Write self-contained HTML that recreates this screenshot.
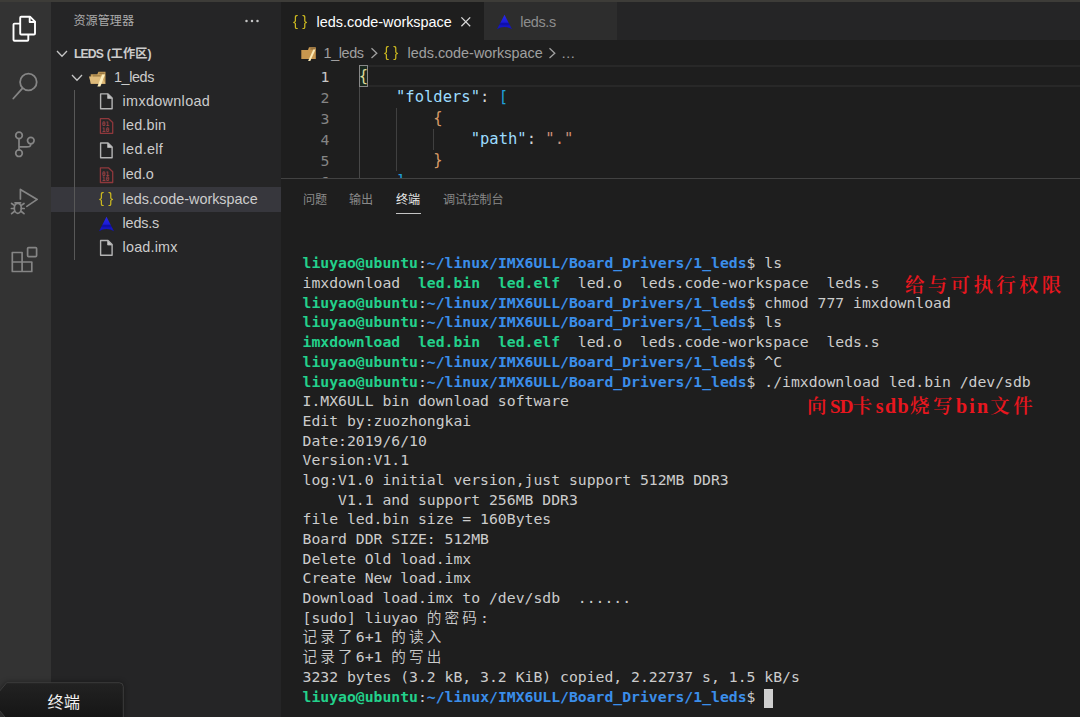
<!DOCTYPE html>
<html lang="zh-CN">
<head>
<meta charset="utf-8">
<title>leds.code-workspace - LEDS (工作区) - Visual Studio Code</title>
<style>
html,body{margin:0;padding:0;}
body{width:1080px;height:717px;overflow:hidden;background:#1e1e1e;position:relative;
  font-family:"Liberation Sans","Noto Sans CJK SC",sans-serif;color:#cccccc;}
.abs{position:absolute;}
#topstrip{left:0;top:0;width:1080px;height:2px;background:#3d3c38;}
#activity{left:0;top:2px;width:51px;height:715px;background:#333333;}
#sidebar{left:51px;top:2px;width:230px;height:715px;background:#252526;}
#editor{left:281px;top:2px;width:799px;height:715px;background:#1e1e1e;}
#tabbar{left:281px;top:2px;width:799px;height:38px;background:#252526;}
#tab1{left:281px;top:2px;width:203px;height:38px;background:#1e1e1e;}
#tab2{left:484px;top:2px;width:133px;height:38px;background:#2d2d2d;}
.ui{font-size:14.3px;line-height:24px;white-space:nowrap;}
.row{left:51px;width:230px;height:24px;}
.row .lbl{position:absolute;top:0;font-size:14.6px;line-height:24px;color:#cccccc;white-space:nowrap;}
.sl{font-size:14.4px;}
.brace{will-change:transform;font-size:14.8px;line-height:23px;color:#cbb820;white-space:nowrap;letter-spacing:4.300px;font-family:"Liberation Sans",sans-serif;}
.mono{font-family:"DejaVu Sans Mono","Liberation Mono",monospace;}
#code{font-size:15.4px;line-height:21px;white-space:pre;color:#d4d4d4;}
.ln{position:absolute;width:40px;text-align:right;color:#858585;font-size:14.8px;line-height:21px;left:289.400px;}
.cl{position:absolute;left:358.700px;font-size:15.5px;line-height:21px;white-space:pre;color:#d4d4d4;}
.k{color:#9cdcfe;} .s{color:#ce9178;}
.guide{position:absolute;width:1px;background:#404040;}
#term{left:302.5px;top:253.4px;font-size:14.75px;line-height:19.68px;white-space:pre;color:#cccccc;
  font-family:"DejaVu Sans Mono","Noto Sans Mono CJK SC","Noto Sans CJK SC","Liberation Mono",monospace;}
#term .g{color:#23d18b;font-weight:bold;}
#term .b{color:#3b8eea;font-weight:bold;}
#term .cj{font-family:"Noto Sans CJK SC","Noto Sans Mono CJK SC",sans-serif;font-weight:350;font-size:14.6px;letter-spacing:3.160px;line-height:0;}
.red{position:absolute;color:#e8161e;font-family:"Liberation Serif","Noto Serif CJK SC",serif;font-weight:600;white-space:nowrap;font-size:19.5px;line-height:28px;letter-spacing:3.400px;}
.red .la{font-weight:bold;font-size:20px;}
.ptab{position:absolute;top:187.6px;font-size:12.1px;line-height:24px;color:#898989;white-space:nowrap;}
</style>
</head>
<body>
<svg width="0" height="0" style="position:absolute"><defs><linearGradient id="ag" x1="0" y1="0" x2="0" y2="1"><stop offset="0" stop-color="#2a2ae6"/><stop offset="0.5" stop-color="#1c1cd8"/><stop offset="0.62" stop-color="#0c0ca0"/><stop offset="0.78" stop-color="#1616c4"/><stop offset="1" stop-color="#1010b4"/></linearGradient></defs></svg>
<div class="abs" id="activity"></div>
<div class="abs" id="sidebar"></div>
<div class="abs" id="editor"></div>
<div class="abs" id="tabbar"></div>
<div class="abs" id="tab1"></div>
<div class="abs" id="tab2"></div>
<div class="abs" id="topstrip"></div>

<!-- activity bar icons -->
<svg class="abs" style="left:0;top:2px" width="51" height="300" viewBox="0 0 51 300" fill="none" stroke-linecap="round" stroke-linejoin="round">
  <!-- explorer -->
  <g stroke="#ffffff" stroke-width="1.9">
    <path d="M21.2 14.7 H30 L35 19.7 V31.5 Q35 32.5 34 32.5 H21.2 Q20.2 32.5 20.2 31.5 V15.7 Q20.2 14.7 21.2 14.7 Z"/>
    <path d="M29.7 14.9 V20 H34.8"/>
    <path d="M20 21.6 H14.5 Q13.5 21.6 13.5 22.6 V37.800 Q13.5 38.8 14.5 38.8 H27.3 Q28.3 38.8 28.3 37.8 V33"/>
  </g>
  <!-- search -->
  <g stroke="#858585" stroke-width="1.8">
    <circle cx="28.4" cy="80" r="8.3"/>
    <path d="M22.4 86.300 L13.3 96.5"/>
  </g>
  <!-- scm -->
  <g stroke="#858585" stroke-width="1.7">
    <circle cx="19" cy="133.4" r="3.3"/>
    <circle cx="19" cy="151.2" r="3.3"/>
    <circle cx="30.8" cy="138.6" r="3.3"/>
    <path d="M19 136.800 V147.800 M30.8 142 C30.8 145 29 144.800 26 144.800 H19.3"/>
  </g>
  <!-- debug -->
  <g stroke="#858585" stroke-width="1.7">
    <path d="M20.4 197 V187.400 L37.2 197.400 L26.8 204.400"/>
    <ellipse cx="17.8" cy="206.3" rx="3.5" ry="5"/>
    <path d="M11.6 201.500 L14.300 203.400 M11.4 206.500 H14.300 M11.600 211.700 L14.300 209.500 M24 201.500 L21.3 203.400 M24.200 206.500 H21.3 M24 211.700 L21.3 209.500 M15 200.800 H20.600"/>
  </g>
  <!-- extensions -->
  <g stroke="#858585" stroke-width="1.7">
    <path d="M12.3 250.5 H22.100 V260 H31.800 V269.500 H12.3 Z M22.100 260 V269.500 M12.3 260 H22.100"/>
    <rect x="27.6" y="245.600" width="9" height="9" rx="1"/>
  </g>
</svg>

<!-- sidebar -->
<div class="abs" style="left:73.5px;top:8.8px;font-size:12.1px;line-height:24px;color:#ababab;white-space:nowrap">资源管理器</div>
<svg class="abs" style="left:242.500px;top:17px" width="20" height="8"><circle cx="3.5" cy="4" r="1.25" fill="#c5c5c5"/><circle cx="9" cy="4" r="1.25" fill="#c5c5c5"/><circle cx="14.5" cy="4" r="1.25" fill="#c5c5c5"/></svg>

<div class="abs" id="ws" style="left:74px;top:42px;font-size:12.200px;line-height:24px;font-weight:bold;color:#cccccc;white-space:nowrap"><span style="letter-spacing:-0.9px">LEDS</span><span style="letter-spacing:0.5px"> </span>(工作区)</div>
<svg class="abs" style="left:54.2px;top:46px" width="16" height="16" fill="none" stroke="#c5c5c5" stroke-width="1.3"><path d="M3 5 L8 10.3 L13 5"/></svg>
<svg class="abs" style="left:69.2px;top:70.300px" width="16" height="16" fill="none" stroke="#c5c5c5" stroke-width="1.3"><path d="M3 5 L8 10.3 L13 5"/></svg>

<!-- folder icon -->
<svg class="abs" style="left:88px;top:70px" width="20" height="18" viewBox="0 0 20 18"><path d="M2.7 4.200 H9.300 L10.400 1.800 H17.500 V13.700 H2.7 Z" fill="#c49c58"/><path d="M5 5.600 H12.400 V6.600 H5 Z" fill="#7d6236"/><path d="M11.500 2.800 H16.5 V3.800 H11.2 Z" fill="#8d6e3d"/><path d="M1 6.500 H13.600 L17.500 13.700 H2.900 Z" fill="#deba7a"/><path d="M14.100 4.400 L17 4.400 L12.400 16.600 L9.400 16.600 Z" fill="#fdeebb"/></svg>

<div class="abs" style="left:51px;top:187px;width:230px;height:24.5px;background:#37373d"></div>
<div class="abs" style="left:74px;top:90px;width:1px;height:170px;background:#585858"></div>

<div class="abs ui sl" id="l0" style="letter-spacing:-0.4px;left:114px;top:65px">1_leds</div>
<div class="abs ui sl" id="l1" style="letter-spacing:0.32px;left:122.6px;top:88.9px">imxdownload</div>
<div class="abs ui sl" id="l2" style="letter-spacing:0.18px;left:122.6px;top:113.2px">led.bin</div>
<div class="abs ui sl" id="l3" style="letter-spacing:0.3px;left:122.6px;top:137.2px">led.elf</div>
<div class="abs ui sl" id="l4" style="left:122.6px;top:161.7px">led.o</div>
<div class="abs ui sl" id="l5" style="left:122.6px;top:186.7px">leds.code-workspace</div>
<div class="abs ui sl" id="l6" style="letter-spacing:-0.2px;left:122.6px;top:210.9px">leds.s</div>
<div class="abs ui sl" id="l7" style="letter-spacing:0.17px;left:122.6px;top:235.2px">load.imx</div>

<!-- file icons -->
<svg class="abs" style="left:95px;top:90px" width="22" height="170" viewBox="0 0 22 170" fill="none">
  <g stroke="#b4b4b4" stroke-width="1.4" stroke-linejoin="round">
    <path d="M5.600 3.900 H13 L17.100 8 V18.700 H5.600 Z"/><path d="M12.600 3.900 V8.400 H17.100 Z" fill="#c8c8c8" stroke-width="0.800"/>
    <path d="M5.600 53 H13 L17.100 57.100 V67.800 H5.600 Z"/><path d="M12.600 53 V57.500 H17.100 Z" fill="#c8c8c8" stroke-width="0.800"/>
    <path d="M5.600 150.500 H13 L17.100 154.600 V165.300 H5.600 Z"/><path d="M12.600 150.500 V155 H17.100 Z" fill="#c8c8c8" stroke-width="0.800"/>
  </g>
  <g stroke="#8f383c" stroke-width="1.3" stroke-linejoin="round">
    <path d="M5.400 28.600 H13.400 L17.700 32.600 V43.300 H5.400 Z"/>
    <path d="M5.400 77.800 H13.400 L17.700 81.800 V92.500 H5.400 Z"/>
  </g>
</svg>
<div class="abs mono" style="left:101.800px;top:121.300px;font-size:6.300px;line-height:5.300px;color:#9c4246;font-weight:bold;white-space:pre">01
10</div>
<div class="abs mono" style="left:101.800px;top:170.500px;font-size:6.300px;line-height:5.300px;color:#9c4246;font-weight:bold;white-space:pre">01
10</div>
<div class="abs brace" style="left:99.300px;top:187px">{}</div>
<svg class="abs" style="left:98px;top:215.500px" width="18" height="18" viewBox="0 0 18 18"><path d="M8.500 0.800 L16 15.300 Q8.500 10.500 1 15.300 Z" fill="url(#ag)"/></svg>

<!-- tabs -->
<div class="abs brace" style="left:293.2px;top:10px">{}</div>
<div class="abs ui sl" id="t1" style="left:316.6px;top:9.5px;color:#ffffff">leds.code-workspace</div>
<svg class="abs" style="left:459px;top:15px" width="14" height="14" fill="none" stroke="#d8d8d8" stroke-width="1.3"><path d="M2.400 2.400 L11.200 11.200 M11.200 2.400 L2.400 11.200"/></svg>
<svg class="abs" style="left:496px;top:13.700px" width="18" height="18" viewBox="0 0 18 18"><path d="M8.500 0.800 L16 15.300 Q8.500 10.500 1 15.300 Z" fill="url(#ag)"/></svg>
<div class="abs ui sl" id="t2" style="left:520.300px;top:9.5px;color:#8e8e8e;letter-spacing:-0.35px">leds.s</div>

<!-- breadcrumbs -->
<svg class="abs" style="left:299.5px;top:45px" width="18" height="18" viewBox="0 0 18 18"><path d="M1.300 5 H8 L9 2.200 H15.800 V13.900 H1.300 Z" fill="#c8974f"/><path d="M10.500 3.300 H15 V4.400 H10.200 Z" fill="#8a683a"/><path d="M13.300 4.500 L15.500 4.500 L10.300 16.100 L8.100 16.100 Z" fill="#fbe9b5"/></svg>
<div class="abs ui sl" id="b1" style="left:323.600px;top:40.5px;color:#a0a0a0;letter-spacing:-0.400px">1_leds</div>
<svg class="abs" style="left:367px;top:47px" width="12" height="14" fill="none" stroke="#a0a0a0" stroke-width="1.300"><path d="M4.500 1.300 L9.800 6.200 L4.500 11.100"/></svg>
<div class="abs brace" style="left:384.200px;top:41px">{}</div>
<div class="abs ui sl" id="b2" style="left:407.500px;top:40.5px;color:#a0a0a0">leds.code-workspace</div>
<svg class="abs" style="left:545px;top:47px" width="12" height="14" fill="none" stroke="#a0a0a0" stroke-width="1.300"><path d="M4.500 1.300 L9.800 6.200 L4.500 11.100"/></svg>
<div class="abs ui sl" id="b3" style="left:561px;top:40.5px;color:#a0a0a0">…</div>

<!-- editor content -->
<div class="abs" style="left:359px;top:65px;width:721px;height:18px;border-top:2px solid #282828;border-bottom:2px solid #282828"></div>
<div class="guide" style="left:359px;top:65px;height:116px;background:#484848"></div>
<div class="guide" style="left:396px;top:108px;height:63px"></div>
<div class="guide" style="left:433px;top:129px;height:21px"></div>
<div class="abs" style="left:359px;top:65px;width:9px;height:22px;border:1px solid #888888;box-sizing:border-box;background:#1c2a1f"></div>

<div class="ln mono" style="top:66.1px;color:#c6c6c6">1</div>
<div class="ln mono" style="top:87.1px">2</div>
<div class="ln mono" style="top:108.1px">3</div>
<div class="ln mono" style="top:129.1px">4</div>
<div class="ln mono" style="top:150.1px">5</div>
<div class="ln mono" style="top:171.1px">6</div>

<div class="cl mono" style="top:66.400px"><span style="color:#dcdc9a">{</span></div>
<div class="cl mono" style="top:87.400px">    <span class="k">"folders"</span>: <span style="color:#1f9fd8">[</span></div>
<div class="cl mono" style="top:108.400px">        <span style="color:#d89a66">{</span></div>
<div class="cl mono" style="top:129.400px">            <span class="k">"path"</span>: <span class="s">"."</span></div>
<div class="cl mono" style="top:150.400px">        <span style="color:#d89a66">}</span></div>
<div class="cl mono" style="top:171.400px">    <span style="color:#1f9fd8">]</span></div>

<!-- panel -->
<div class="abs" style="left:281px;top:178px;width:799px;height:539px;background:#1e1e1e"></div>
<div class="abs" style="left:281px;top:178px;width:799px;height:1px;background:#424242"></div>
<div class="ptab" style="left:303px">问题</div>
<div class="ptab" style="left:349px">输出</div>
<div class="ptab" style="left:396px;color:#e7e7e7">终端</div>
<div class="ptab" style="left:443px">调试控制台</div>
<div class="abs" style="left:396px;top:213.200px;width:25px;height:1.300px;background:#c4c4c4"></div>

<div class="abs" id="term"><span class="g">liuyao@ubuntu</span>:<span class="b">~/linux/IMX6ULL/Board_Drivers/1_leds</span>$ ls
imxdownload  <span class="g">led.bin</span>  <span class="g">led.elf</span>  led.o  leds.code-workspace  leds.s
<span class="g">liuyao@ubuntu</span>:<span class="b">~/linux/IMX6ULL/Board_Drivers/1_leds</span>$ chmod 777 imxdownload
<span class="g">liuyao@ubuntu</span>:<span class="b">~/linux/IMX6ULL/Board_Drivers/1_leds</span>$ ls
<span class="g">imxdownload</span>  <span class="g">led.bin</span>  <span class="g">led.elf</span>  led.o  leds.code-workspace  leds.s
<span class="g">liuyao@ubuntu</span>:<span class="b">~/linux/IMX6ULL/Board_Drivers/1_leds</span>$ ^C
<span class="g">liuyao@ubuntu</span>:<span class="b">~/linux/IMX6ULL/Board_Drivers/1_leds</span>$ ./imxdownload led.bin /dev/sdb
I.MX6ULL bin download software
Edit by:zuozhongkai
Date:2019/6/10
Version:V1.1
log:V1.0 initial version,just support 512MB DDR3
    V1.1 and support 256MB DDR3
file led.bin size = 160Bytes
Board DDR SIZE: 512MB
Delete Old load.imx
Create New load.imx
Download load.imx to /dev/sdb  ......
[sudo] liuyao <span class="cj">的密码</span>:
<span class="cj">记录了</span>6+1 <span class="cj">的读入</span>
<span class="cj">记录了</span>6+1 <span class="cj">的写出</span>
3232 bytes (3.2 kB, 3.2 KiB) copied, 2.22737 s, 1.5 kB/s
<span class="g">liuyao@ubuntu</span>:<span class="b">~/linux/IMX6ULL/Board_Drivers/1_leds</span>$ </div>
<div class="abs" style="left:764px;top:688.700px;width:9px;height:19px;background:#cfcfcf"></div>

<div class="red" id="r1" style="left:905px;top:271.700px;letter-spacing:3.300px">给与可执行权限</div>
<div class="red" id="r2" style="left:807px;top:392px">向<span class="la" id="la1" style="letter-spacing:-0.700px;font-size:19px">SD</span>卡<span class="la" id="la2" style="letter-spacing:1.450px">sdb</span>烧写<span class="la" id="la3" style="letter-spacing:2.200px">bin</span>文件</div>

<!-- tooltip -->
<svg class="abs" style="left:0;top:670px;overflow:visible" width="140" height="47" viewBox="0 670 140 47">
  <defs>
    <linearGradient id="tg" x1="0" y1="0" x2="0" y2="1"><stop offset="0" stop-color="#222222"/><stop offset="1" stop-color="#151515"/></linearGradient>
    <filter id="ts" x="-20%" y="-40%" width="140%" height="180%"><feGaussianBlur stdDeviation="3"/></filter>
  </defs>
  <path d="M6.7 682.700 L-8.500 700.700 L6.700 719.200 H123.300 V686.700 Q123.300 682.700 119.300 682.700 Z" fill="#000000" opacity="0.45" filter="url(#ts)"/>
  <path d="M6.7 682.700 L-8.500 700.700 L6.700 719.200 H123.300 V686.700 Q123.300 682.700 119.300 682.700 Z" fill="url(#tg)" stroke="#3c3c3c" stroke-width="1"/>
</svg>
<div class="abs" style="left:47.500px;top:689.500px;font-size:16.300px;line-height:24px;color:#f2f2f2;white-space:nowrap">终端</div>
</body>
</html>
